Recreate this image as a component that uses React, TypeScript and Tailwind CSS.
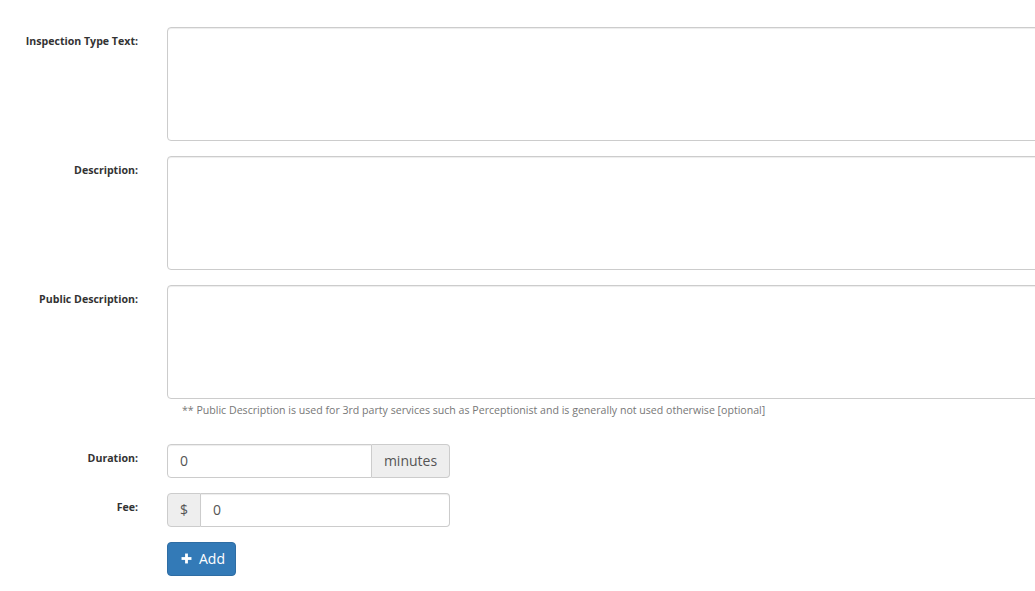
import { Plus } from "lucide-react";

const font = { fontFamily: "'Open Sans', 'Liberation Sans', sans-serif" };

function Row({ label, children, top = "pt-[7px]" }: { label: string; children: React.ReactNode; top?: string }) {
  return (
    <div className="flex">
      <label className={`w-[138px] shrink-0 text-right text-[10.6px] font-bold text-[#333] ${top}`}>{label}</label>
      <div className="ml-[29px] flex-1">{children}</div>
    </div>
  );
}

const area =
  "block w-[900px] h-[114px] rounded-[4px] border border-[#ccc] bg-white shadow-[inset_0_1px_1px_rgba(0,0,0,0.075)] resize-none outline-none";

export default function App() {
  return (
    <div className="w-[1035px] h-[591px] overflow-hidden bg-white pt-[27px]" style={font}>
      <div className="flex flex-col gap-[15px]">
        <Row label="Inspection Type Text:">
          <textarea className={area} />
        </Row>
        <Row label="Description:">
          <textarea className={area} />
        </Row>
        <Row label="Public Description:">
          <textarea className={area} />
          <p className="mt-[4px] pl-[15px] text-[10.6px] text-[#777]">
            ** Public Description is used for 3rd party services such as Perceptionist and is generally not used otherwise [optional]
          </p>
        </Row>
      </div>

      <div className="mt-[25px] flex flex-col gap-[15px]">
        <Row label="Duration:">
          <div className="flex w-[283px] h-[34px] text-[14px] text-[#555]">
            <input
              defaultValue="0"
              className="w-0 flex-1 rounded-l-[4px] border border-[#ccc] px-[12px] outline-none shadow-[inset_0_1px_1px_rgba(0,0,0,0.075)]"
            />
            <span className="flex w-[78px] items-center justify-center rounded-r-[4px] border border-l-0 border-[#ccc] bg-[#eee]">minutes</span>
          </div>
        </Row>
        <Row label="Fee:">
          <div className="flex w-[283px] h-[34px] text-[14px] text-[#555]">
            <span className="flex items-center justify-center w-[34px] rounded-l-[4px] border border-[#ccc] bg-[#eee]">$</span>
            <input
              defaultValue="0"
              className="w-0 flex-1 rounded-r-[4px] border border-l-0 border-[#ccc] px-[12px] outline-none shadow-[inset_0_1px_1px_rgba(0,0,0,0.075)]"
            />
          </div>
        </Row>
        <Row label="">
          <button className="flex h-[34px] w-[69px] items-center justify-center gap-[4px] rounded-[4px] border border-[#2e6da4] bg-[#337ab7] text-[14px] text-white">
            <Plus size={17} strokeWidth={4} strokeLinecap="butt" />
            Add
          </button>
        </Row>
      </div>
    </div>
  );
}
